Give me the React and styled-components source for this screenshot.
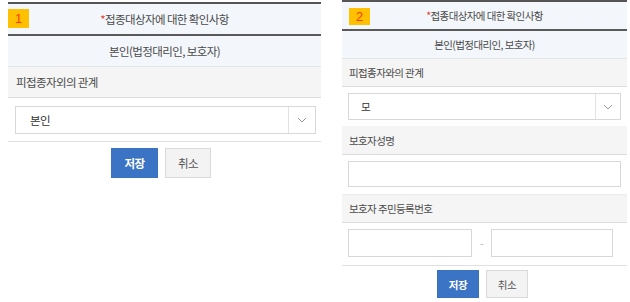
import React from "react";
import styled, { createGlobalStyle } from "styled-components";

const Global = createGlobalStyle`
  html, body { margin: 0; padding: 0; background: #fff; }
  body { font-family: "Noto Sans CJK KR", "Noto Sans", sans-serif; color: #4a4a4a; }
`;

const Page = styled.div`
  display: flex;
  align-items: flex-start;
  width: 630px;
  height: 302px;
  overflow: hidden;
`;

const Panel = styled.section`
  box-sizing: border-box;
  width: ${(p) => p.$w}px;
  margin-left: ${(p) => p.$ml}px;
  margin-top: ${(p) => p.$mt}px;
  font-size: ${(p) => p.$fs}px;
  letter-spacing: -0.6px;
`;

const HeadRow = styled.div`
  position: relative;
  display: flex;
  align-items: center;
  justify-content: center;
  height: ${(p) => p.$h}px;
  background: #f3f7fb;
  border-top: 2px solid #555;
  border-bottom: 2px solid #5a5a5a;
  color: #4a4a4a;
`;

const SubRow = styled.div`
  display: flex;
  align-items: center;
  justify-content: center;
  height: ${(p) => p.$h}px;
  background: #f3f7fb;
  border-bottom: 1px solid #e4e6e8;
  color: #4a4a4a;
`;

const Badge = styled.span`
  position: absolute;
  left: ${(p) => p.$l}px;
  top: ${(p) => p.$t}px;
  width: 21px;
  height: ${(p) => p.$h}px;
  background: #ffc000;
  color: #ff3b00;
  font-family: "Liberation Sans", Arial, sans-serif;
  font-size: 13px;
  letter-spacing: 0;
  display: flex;
  align-items: center;
  justify-content: center;
`;

const Star = styled.span`
  color: #e53a2f;
`;

const LabelRow = styled.div`
  display: flex;
  align-items: center;
  height: ${(p) => p.$h}px;
  padding-left: ${(p) => p.$pl}px;
  background: #f5f5f5;
  border-top: ${(p) => (p.$topLine ? "1px solid #ececec" : "none")};
  border-bottom: 1px solid #dcdcdc;
  color: #4a4a4a;
`;

const FieldRow = styled.div`
  display: flex;
  align-items: center;
  padding: ${(p) => p.$pad};
  border-bottom: ${(p) => (p.$line ? "1px solid #e0e0e0" : "none")};
`;

const Select = styled.div`
  box-sizing: border-box;
  flex: 1;
  display: flex;
  height: ${(p) => p.$h}px;
  border: 1px solid #d8d8d8;
  background: #fff;
`;

const SelectText = styled.div`
  flex: 1;
  display: flex;
  align-items: center;
  padding-left: ${(p) => p.$pl}px;
  color: #333;
`;

const Arrow = styled.div`
  width: ${(p) => p.$w}px;
  border-left: 1px solid #e2e2e2;
  display: flex;
  align-items: center;
  justify-content: center;
`;

const Input = styled.div`
  box-sizing: border-box;
  flex: ${(p) => (p.$w ? "none" : 1)};
  width: ${(p) => (p.$w ? `${p.$w}px` : "auto")};
  height: ${(p) => p.$h}px;
  border: 1px solid #d8d8d8;
  background: #fff;
`;

const Dash = styled.span`
  width: 19px;
  text-align: center;
  color: #999;
  font-size: 9px;
`;

const Buttons = styled.div`
  display: flex;
  justify-content: center;
  gap: 7px;
  padding-top: ${(p) => p.$pt}px;
  padding-right: ${(p) => p.$pr || 0}px;
`;

const Button = styled.button`
  box-sizing: border-box;
  width: ${(p) => p.$w}px;
  height: ${(p) => p.$h}px;
  padding: 0;
  font-family: inherit;
  font-size: inherit;
  letter-spacing: -0.5px;
  border: 1px solid ${(p) => (p.$primary ? "#3a72c0" : "#dadada")};
  background: ${(p) => (p.$primary ? "#3b74c4" : "#f3f3f3")};
  color: ${(p) => (p.$primary ? "#fff" : "#555")};
  font-weight: ${(p) => (p.$primary ? 700 : 400)};
`;

const Chevron = () => (
  <svg width="10" height="6" viewBox="0 0 10 6">
    <path d="M1 1 L5 5 L9 1" fill="none" stroke="#999" strokeWidth="1" />
  </svg>
);

export default function App() {
  return (
    <Page>
      <Global />
      <Panel $w={313} $ml={8} $mt={2} $fs={11.5}>
        <HeadRow $h={30}>
          <Badge $l={0} $t={5} $h={19}>1</Badge>
          <span><Star>*</Star>접종대상자에 대한 확인사항</span>
        </HeadRow>
        <SubRow $h={30}>본인(법정대리인, 보호자)</SubRow>
        <LabelRow $h={30} $pl={8}>피접종자외의 관계</LabelRow>
        <FieldRow $pad="8px 5px 7px 7px" $line>
          <Select $h={28}>
            <SelectText $pl={14}>본인</SelectText>
            <Arrow $w={26}><Chevron /></Arrow>
          </Select>
        </FieldRow>
        <Buttons $pt={6} $pr={7}>
          <Button $primary $w={47} $h={30}>저장</Button>
          <Button $w={46} $h={30}>취소</Button>
        </Buttons>
      </Panel>
      <Panel $w={285} $ml={21} $mt={0} $fs={10.5}>
        <HeadRow $h={27}>
          <Badge $l={7} $t={6} $h={17}>2</Badge>
          <span><Star>*</Star>접종대상자에 대한 확인사항</span>
        </HeadRow>
        <SubRow $h={27}>본인(법정대리인, 보호자)</SubRow>
        <LabelRow $h={27} $pl={7}>피접종자와의 관계</LabelRow>
        <FieldRow $pad="6px 6px 6px 6px">
          <Select $h={27}>
            <SelectText $pl={12}>모</SelectText>
            <Arrow $w={24}><Chevron /></Arrow>
          </Select>
        </FieldRow>
        <LabelRow $h={28} $pl={7}>보호자성명</LabelRow>
        <FieldRow $pad="6px 6px 7px 6px">
          <Input $h={26} />
        </FieldRow>
        <LabelRow $h={27} $pl={7} $topLine>보호자 주민등록번호</LabelRow>
        <FieldRow $pad="6px 14px 8px 6px" $line>
          <Input $h={28} $w={124} />
          <Dash>-</Dash>
          <Input $h={28} />
        </FieldRow>
        <Buttons $pt={4} $pr={4}>
          <Button $primary $w={42} $h={28}>저장</Button>
          <Button $w={42} $h={28}>취소</Button>
        </Buttons>
      </Panel>
    </Page>
  );
}
